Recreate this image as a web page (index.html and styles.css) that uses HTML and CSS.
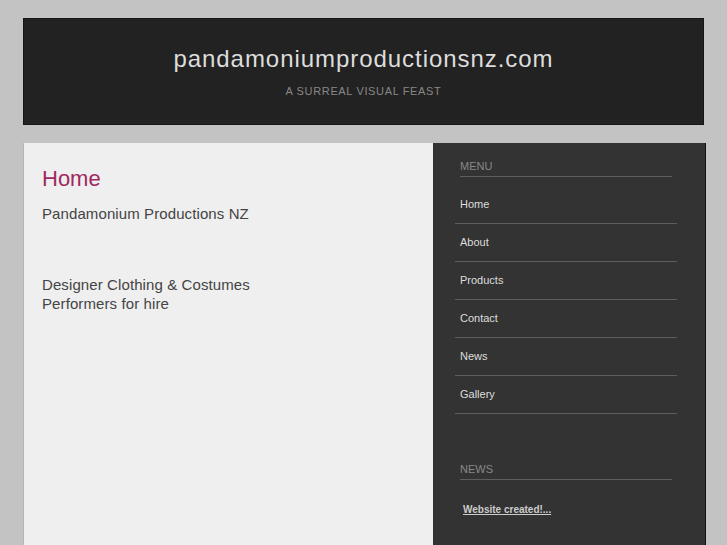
FILE: index.html
```html
<!DOCTYPE html>
<html>
<head>
    <title>pandamoniumproductionsnz.com</title>
    <link rel="stylesheet" href="styles.css">
</head>
<body>
    <div class="wrapper">
        <header class="site-header">
            <h1 class="site-title">pandamoniumproductionsnz.com</h1>
            <div class="tagline">A surreal visual feast</div>
        </header>
        <div class="content">
            <div class="main">
                <h2>Home</h2>
                <p>Pandamonium Productions NZ</p>
                <p>&nbsp;</p>
                <p>Designer Clothing &amp; Costumes<br>Performers for hire</p>
            </div>
            <div class="sidebar">
                <h3>Menu</h3>
                <ul class="menu">
                    <li><a href="#">Home</a></li>
                    <li><a href="#">About</a></li>
                    <li><a href="#">Products</a></li>
                    <li><a href="#">Contact</a></li>
                    <li><a href="#">News</a></li>
                    <li><a href="#">Gallery</a></li>
                </ul>
                <h3 class="news-title">News</h3>
                <p class="news-item"><a href="#">Website created!...</a></p>
            </div>
        </div>
    </div>
</body>
</html>
```
FILE: styles.css
```css
body {
    margin: 0;
    background-color: #c3c3c3;
    font-family: "Liberation Sans", Arial, sans-serif;
}
.wrapper {
    width: 683px;
    margin: 18px 0 0 23px;
}
.site-header {
    width: 681px;
    box-sizing: border-box;
    background-color: #222;
    border: 1px solid #151515;
    padding: 25px 0 26px;
    text-align: center;
}
.site-title {
    margin: 0;
    font-size: 24px;
    line-height: 30px;
    font-weight: normal;
    letter-spacing: 0.95px;
    color: #ddd;
}
.tagline {
    margin-top: 10px;
    font-size: 11px;
    line-height: 14px;
    letter-spacing: 0.65px;
    color: #888;
    text-transform: uppercase;
}
.content {
    margin-top: 18px;
    display: grid;
    grid-template-columns: 410px 273px;
    min-height: 420px;
}
.main {
    background-color: #efefef;
    border-left: 1px solid #b5b5b5;
    padding: 23px 18px;
}
.main h2 {
    margin: 0 0 12px;
    font-size: 22px;
    line-height: 26px;
    font-weight: normal;
    color: #a0295f;
}
.main p {
    margin: 0 0 16.5px;
    font-size: 15px;
    line-height: 19px;
    letter-spacing: 0.1px;
    color: #444;
}
.sidebar {
    background-color: #333;
    border-right: 1px solid #111;
    padding: 13px 28px 0 22px;
}
.sidebar h3 {
    margin: 0 5px 9px;
    font-size: 11px;
    line-height: 20px;
    font-weight: normal;
    color: #888;
    text-transform: uppercase;
    border-bottom: 1px solid #5e5e5e;
}
.menu {
    list-style: none;
    margin: 0;
    padding: 0;
}
.menu li {
    border-bottom: 1px solid #5e5e5e;
}
.menu a {
    display: block;
    padding-left: 5px;
    font-size: 11px;
    line-height: 37px;
    color: #ddd;
    text-decoration: none;
}
.sidebar .news-title {
    margin-top: 45px;
}
.news-item {
    margin: 22px 0 0 8px;
    font-size: 10px;
    line-height: 16px;
}
.news-item a {
    color: #ccc;
    font-weight: bold;
}
```
